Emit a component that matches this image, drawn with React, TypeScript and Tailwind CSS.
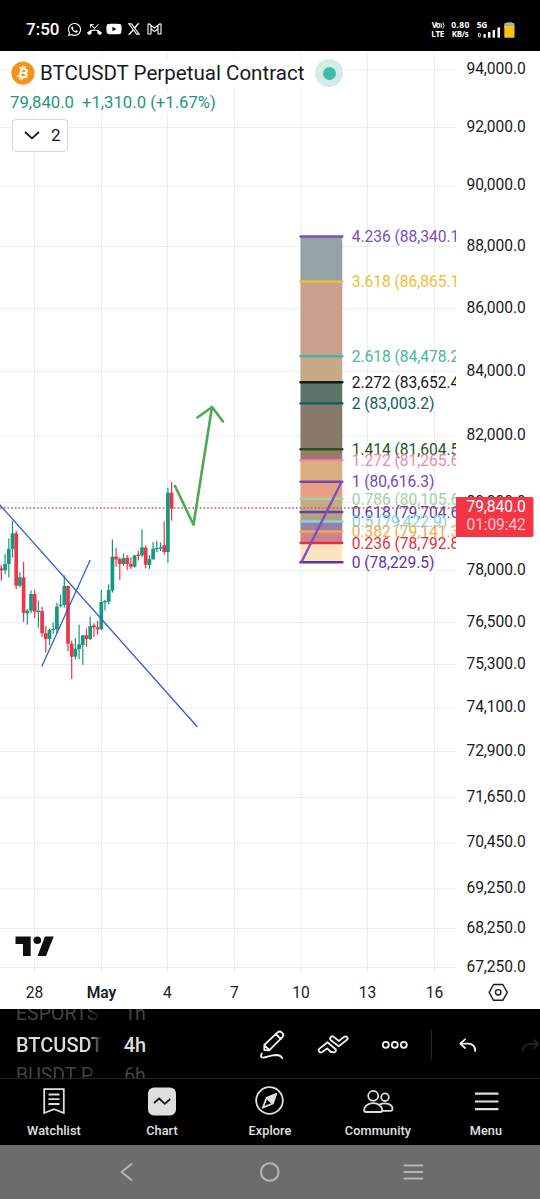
import React from "react";
import { FaBitcoin, FaWhatsapp, FaYoutube } from "react-icons/fa";
import { FaXTwitter } from "react-icons/fa6";
import { MdPhoneMissed } from "react-icons/md";

// [direction, high, body top, body bottom, low], in thirds of a pixel below y = 460
const CANDLES: [string, number, number, number, number][] = [
  ["r", 315, 325, 331, 362], ["g", 282, 312, 331, 343], ["g", 235, 267, 312, 352],
  ["g", 182, 220, 267, 293], ["r", 213, 220, 377, 388], ["g", 337, 352, 377, 383],
  ["r", 306, 352, 459, 486], ["g", 447, 452, 460, 494], ["g", 391, 402, 452, 460],
  ["r", 389, 402, 455, 474], ["g", 422, 452, 456, 503], ["r", 440, 453, 520, 530],
  ["r", 498, 520, 537, 578], ["g", 505, 510, 537, 556], ["g", 487, 507, 510, 522],
  ["g", 428, 440, 508, 520], ["g", 404, 434, 438, 442], ["g", 346, 378, 435, 443],
  ["r", 377, 378, 551, 574], ["r", 542, 551, 590, 657], ["g", 534, 566, 590, 598],
  ["g", 494, 553, 567, 598], ["g", 524, 526, 555, 615], ["r", 506, 526, 537, 560],
  ["g", 470, 498, 537, 540], ["r", 490, 496, 502, 530], ["r", 482, 502, 508, 524],
  ["g", 390, 426, 508, 510], ["g", 419, 423, 427, 452], ["g", 373, 390, 425, 433],
  ["g", 238, 290, 392, 398], ["r", 264, 290, 298, 320], ["r", 292, 297, 312, 360],
  ["g", 280, 294, 312, 318], ["r", 285, 293, 312, 330], ["r", 292, 311, 320, 327],
  ["g", 285, 286, 320, 323], ["r", 272, 284, 288, 302], ["g", 208, 262, 286, 292],
  ["r", 256, 263, 314, 325], ["g", 285, 297, 315, 327], ["g", 246, 266, 298, 299],
  ["g", 242, 264, 268, 276], ["g", 247, 262, 266, 274], ["r", 184, 256, 276, 284],
  ["g", 83, 98, 276, 308], ["r", 66, 98, 146, 182],
];

const PRICES: [string, number][] = [
  ["94,000.0", 70], ["92,000.0", 127.5], ["90,000.0", 186], ["88,000.0", 246.5],
  ["86,000.0", 308.5], ["84,000.0", 371.5], ["82,000.0", 436], ["80,000.0", 502.5],
  ["78,000.0", 570.5], ["76,500.0", 622.5], ["75,300.0", 664.5], ["74,100.0", 708],
  ["72,900.0", 751.5], ["71,650.0", 797.5], ["70,450.0", 843], ["69,250.0", 889],
  ["68,250.0", 928.5], ["67,250.0", 967.5],
];

const DATES: [string, number][] = [
  ["28", 34.5], ["May", 101.5], ["4", 167.5], ["7", 234.5], ["10", 301], ["13", 367.5], ["16", 434.5],
];

// level, line colour, y, fill below the line
const LEVELS: [string, string, number, string][] = [
  ["4.236 (88,340.1)", "#7850bb", 236.5, "#95a2a6"],
  ["3.618 (86,865.1)", "#efbe35", 281.5, "#caa08e"],
  ["2.618 (84,478.2)", "#48b5a0", 356.3, "#c5aa85"],
  ["2.272 (83,652.4)", "#17181c", 382.3, "#5b7467"],
  ["2 (83,003.2)", "#0a625b", 403.4, "#89796a"],
  ["1.414 (81,604.5)", "#1e5522", 449.2, "#9f7a6c"],
  ["1.272 (81,265.6)", "#ec8ba8", 460.4, "#dcb07e"],
  ["1 (80,616.3)", "#7547b6", 481.7, "#e7a084"],
  ["0.786 (80,105.6)", "#a2d2a2", 498.8, "#c4ab83"],
  ["0.618 (79,704.6)", "#6340a8", 512, "#b3a184"],
  ["0.5 (79,422.9)", "#7dd5e7", 521.5, "#9d7ea7"],
  ["0.382 (79,141.3)", "#f3aa49", 531.5, "#ce8290"],
  ["0.236 (78,792.8)", "#e33040", 543, "#fce4c0"],
  ["0 (78,229.5)", "#5c35a5", 562.3, "none"],
];

function Plot() {
  return (
    <svg width="456" height="958" viewBox="0 51 456 958" className="block shrink-0 font-['Roboto',sans-serif]">
      <g stroke="#edeef0" strokeWidth="1">
        {DATES.map(([d, x]) => <line key={d} x1={x} x2={x} y1="51" y2="973" />)}
        {PRICES.map(([p, y]) => <line key={p} x1="0" x2="456" y1={y} y2={y} />)}
      </g>
      {LEVELS.slice(0, -1).map(([l, , y, fill], i) => (
        <rect key={l} x="300.5" width="41.8" y={y} height={LEVELS[i + 1][2] - y} fill={fill} />
      ))}
      {LEVELS.map(([l, c, y]) => (
        <g key={l}>
          <line x1="300.5" x2="342.3" y1={y} y2={y} stroke={c} strokeWidth="2.4" strokeLinecap="round" />
          <text x="351.8" y={y + 5.7} fill={c} fontSize="15.6" letterSpacing="-0.05">{l}</text>
        </g>
      ))}
      <line x1="301.5" y1="562" x2="341.5" y2="482" stroke="#7e4fbd" strokeWidth="2.4" />
      {CANDLES.map(([dir, h, t, b, l], i) => {
        const x = 1.4 + i * 3.7;
        const c = dir === "g" ? "#149980" : "#ed3547";
        return (
          <g key={i} fill={c}>
            <rect x={x - 0.6} width="1.2" y={460 + h / 3} height={(l - h) / 3} />
            <rect x={x - 1.85} width="3.7" y={460 + t / 3} height={(b - t) / 3} />
          </g>
        );
      })}
      <line x1="0" x2="456" y1="508" y2="508" stroke="#c75360" strokeWidth="1.4" strokeDasharray="1.6 2.1" />
      <g stroke="#2f5bd0" strokeWidth="1.25" strokeLinecap="round">
        <line x1="0" y1="505" x2="197" y2="726.5" />
        <line x1="42" y1="666" x2="90" y2="560.5" />
      </g>
      <g stroke="#4caa50" strokeWidth="2.6" strokeLinecap="round" strokeLinejoin="round" fill="none">
        <path d="M175 486 193.5 524.7 212 407M197.5 417.5 212 407 223 421.5" />
      </g>
      <g fill="#0f0f0f">
        <path d="M15.5 936.5H30.7V956H23V944H15.5zM45 936.5H53.7L46 956H37.5z" />
        <circle cx="37.3" cy="940.3" r="3.8" />
      </g>
      {DATES.map(([d, x]) => (
        <text key={d} x={x} y="998" textAnchor="middle" fontSize="15.6" fill="#191b22" fontWeight={d === "May" ? 600 : 400}>{d}</text>
      ))}
    </svg>
  );
}

function PriceAxis() {
  return (
    <svg width="84" height="958" viewBox="456 51 84 958" className="block shrink-0 font-['Roboto',sans-serif]">
      {PRICES.map(([p, y]) => <text key={p} x="466.5" y={y + 4.1} fontSize="15.6" letterSpacing="-0.08" fill="#191b22">{p}</text>)}
      <path d="M456 497H531.5Q533.5 497 533.5 499V535Q533.5 537 531.5 537H456z" fill="#f23645" />
      <text x="466.5" y="512.3" fontSize="15.6" letterSpacing="-0.08" fill="#fff">79,840.0</text>
      <text x="466.5" y="530.2" fontSize="15.6" letterSpacing="-0.12" fill="#fbc4c9">01:09:42</text>
      <g fill="none" stroke="#1b1c20" strokeWidth="1.4" strokeLinejoin="round">
        <path d="M489.2 992.3 493.5 984.5H502.8L507.3 992.3 502.8 1000.3H493.5z" />
        <circle cx="498.2" cy="992.3" r="2.7" />
      </g>
    </svg>
  );
}

function StatusBar() {
  return (
    <div className="flex h-[51px] shrink-0 items-center bg-black pl-[26px] pr-[25px] pt-[7px] text-white">
      <span className="w-[41px] text-[17px] font-medium leading-none">7:50</span>
      <FaWhatsapp className="size-[15px]" />
      <MdPhoneMissed className="ml-[5px] size-[15px]" />
      <FaYoutube className="ml-[4px] size-[16px]" />
      <FaXTwitter className="ml-[5px] size-[14px]" />
      <svg className="ml-[6px]" width="15" height="12" viewBox="0 0 15 12" fill="none" stroke="currentColor" strokeWidth="1.1" strokeLinejoin="round">
        <path d="M1 1.7Q1 .8 2 .8L7.5 5 13 .8Q14 .8 14 1.7V11H11V5.8L7.5 8.6 4 5.8V11H1zM4 2.5V6M11 2.5V6" />
      </svg>
      <svg width="85" height="23" viewBox="430 17 85 23" fill="currentColor" className="ml-auto font-['Open_Sans',sans-serif] font-bold">
        <text x="431.8" y="27.3" fontSize="8" textLength="9">Vo</text>
        <path d="M440.8 22.2Q442.8 24.5 440.8 26.8M442.8 21.5Q445.4 24.5 442.8 27.5" fill="none" stroke="currentColor" strokeWidth=".9" />
        <text x="431.3" y="36" fontSize="8.2" textLength="13">LTE</text>
        <text x="451.3" y="27.3" fontSize="8.6" textLength="18">0.80</text>
        <text x="451.8" y="36.3" fontSize="7.9" textLength="17">KB/s</text>
        <text x="476.8" y="27.3" fontSize="8.3" textLength="10.5">5G</text>
        <rect x="478.4" y="32.2" width="1.9" height="3.8" rx=".9" fill="none" stroke="currentColor" strokeWidth=".9" />
        <rect x="483.5" y="33" width="2.2" height="3.7" /><rect x="488" y="31" width="2.4" height="5.7" />
        <rect x="492.6" y="29" width="2.4" height="7.7" /><rect x="497.5" y="26.5" width="2.5" height="10.2" />
        <path d="M507 22V21.2H512.2V22H513.5Q514.5 22 514.5 23V26.5H504.3V23Q504.3 22 505.3 22z" fill="#aaa" />
        <path d="M504.3 25H514.5V35.7Q514.5 36.7 513.5 36.7H505.3Q504.3 36.7 504.3 35.7z" fill="#fcc30b" />
      </svg>
    </div>
  );
}

function Toolbar() {
  return (
    <div className="flex h-[70px] shrink-0 items-center border-b border-[#232323] bg-black">
      <div className="relative flex h-full w-[240px] overflow-hidden pl-4 text-[#dcdcdc]">
        <div className="-mt-[8px] w-[86px] shrink-0 overflow-hidden whitespace-nowrap text-[20px] leading-[30px] [mask-image:linear-gradient(to_right,black_84%,transparent)]">
          <div className="h-[28px] text-[19.5px] leading-[26px] text-[#444]">ESPORTS</div>
          <div className="h-[31px] font-medium leading-[32px]">BTCUSDT</div>
          <div className="h-[30px] text-[19.5px] leading-[31px] text-[#444]">BUSDT P</div>
        </div>
        <div className="-mt-[8px] w-[66px] text-center text-[20px] leading-[30px]">
          <div className="h-[28px] text-[19.5px] leading-[26px] text-[#444]">1h</div>
          <div className="h-[31px] font-medium leading-[32px]">4h</div>
          <div className="h-[30px] text-[19.5px] leading-[31px] text-[#444]">6h</div>
        </div>
      </div>
      <svg width="300" height="69" viewBox="240 1009 300 69" fill="none" stroke="#f2f2f2" strokeWidth="1.8" strokeLinecap="round" strokeLinejoin="round">
        <path d="M264.3 1050V1045L277.8 1032.2Q279.7 1030.6 281.6 1032.4L282.4 1033.2Q284.2 1035 282.6 1036.8L269.2 1050.3zM264.5 1045.3 269.3 1050M275.8 1034 280.8 1039" />
        <path d="M261.8 1053.5Q259.5 1057.5 263 1057.7C267 1057.5 271 1055 276 1055Q281 1055.3 282.2 1058.2" />
        <path d="M319.5 1048.6 327.5 1042.3 335 1048.8A1.9 1.9 0 0 1 332.8 1052H330.8L327.2 1048.4 322.2 1051.9A2 2 0 0 1 319.5 1048.6z" />
        <path d="M330.9 1040.2A2 2 0 0 1 333.8 1036.9L338.8 1041 344.3 1036.7A2 2 0 0 1 346.7 1040L338.7 1046.3z" />
        <circle cx="385.8" cy="1044.8" r="3" /><circle cx="394.8" cy="1044.8" r="3" /><circle cx="403.8" cy="1044.8" r="3" />
        <path d="M431.3 1030V1060" stroke="#2d2d2d" strokeWidth="1" />
        <path d="M465 1039.3 460.3 1043.6 465 1048M460.8 1043.6H468Q475.2 1043.8 475.2 1051" />
        <path d="M534 1040 538.5 1044 534 1048M538 1044H531Q523.2 1044.5 522.7 1051" stroke="#222" />
      </svg>
    </div>
  );
}

function Tab({ label, children }: { label: string; children: React.ReactNode }) {
  return (
    <div className="flex w-[108px] flex-col items-center pt-[7px]">
      <svg width="32" height="30" viewBox="0 0 32 30" fill="none" stroke="#dedede" strokeWidth="1.8">{children}</svg>
      <span className="mt-[6px] text-[12.7px] font-medium leading-[18px] tracking-[0.1px] text-[#e0e0e0]">{label}</span>
    </div>
  );
}

export default function App() {
  return (
    <div className="flex h-[1199px] w-[540px] flex-col overflow-hidden bg-white font-['Roboto',sans-serif]">
      <StatusBar />
      <main className="relative flex h-[958px] shrink-0">
        <Plot />
        <PriceAxis />
        <div className="absolute left-[10px] top-[8px] flex flex-col items-start">
          <div className="flex h-[28px] items-center bg-white/80">
            <FaBitcoin className="ml-px size-[24px] text-[#f7931a]" />
            <span className="ml-[5px] w-[275px] whitespace-nowrap text-[20.55px] text-[#17181f]">BTCUSDT Perpetual Contract</span>
            <span className="flex size-[28px] items-center justify-center rounded-full bg-[#d2ece7]"><span className="size-[13px] rounded-full bg-[#40bca5]" /></span>
          </div>
          <div className="mt-[5px] flex h-[22px] items-center gap-[8px] bg-white/80 text-[16.7px] text-[#23967f]">
            <span>79,840.0</span><span>+1,310.0 (+1.67%)</span>
          </div>
          <div className="ml-[2px] mt-[5px] flex h-[33px] w-[56px] items-center rounded-[4px] border border-[#d7d8dc] bg-white pl-[11px] text-[17px] text-[#131722]">
            <svg width="16" height="9" viewBox="0 0 16 9" fill="none" stroke="currentColor" strokeWidth="1.8"><path d="M1 1 8 7.3 15 1" /></svg>
            <span className="ml-[11px]">2</span>
          </div>
        </div>
      </main>
      <Toolbar />
      <nav className="flex h-[66px] shrink-0 bg-black">
        <Tab label="Watchlist">
          <path d="M6.2 3.2H25.8V27L16 23.2 6.2 27z M10.5 8.5H21.5M10.5 13.2H21.5M10.5 18H21.5" />
        </Tab>
        <Tab label="Chart">
          <rect x="2" y="1.5" width="28" height="28" rx="6" fill="#dedede" stroke="none" />
          <path d="M8 17 13.2 12.5 18.8 17.8 24.2 13" stroke="#111" />
        </Tab>
        <Tab label="Explore">
          <circle cx="15.5" cy="14.5" r="13.3" />
          <path d="M22 8 18.8 17.5 8.8 21.7 12.5 12z" strokeLinejoin="round" />
          <path d="M22 8 18.8 17.5 12.5 12z" fill="#dedede" strokeLinejoin="round" />
        </Tab>
        <Tab label="Community">
          <circle cx="11.2" cy="9.8" r="5" /><circle cx="23" cy="11.2" r="3.8" />
          <path d="M2.2 24.3C2.2 14.8 20.2 14.8 20.2 24.3Q20.2 26 18.5 26H4Q2.2 26 2.2 24.3zM17.5 18.6C23 15.8 30.8 17.8 30.5 23.2Q30.3 24.8 29 24.8H20.3" />
        </Tab>
        <Tab label="Menu">
          <path d="M4.9 7.7H28.5M4.9 15.5H28.5M4.9 23.2H28.5" strokeWidth="2.2" />
        </Tab>
      </nav>
      <div className="h-[54px] shrink-0 bg-[#6c6c6c]">
        <svg width="540" height="54" viewBox="0 1145 540 54" fill="none" stroke="#b6b6b6" strokeWidth="2" strokeLinecap="round" strokeLinejoin="round">
          <path d="M131.5 1164 121.5 1172 131.5 1180" /><circle cx="269.8" cy="1172" r="8.8" />
          <path d="M404.5 1165.5H422.3M404.5 1172H422.3M404.5 1178.5H422.3" />
        </svg>
      </div>
    </div>
  );
}
